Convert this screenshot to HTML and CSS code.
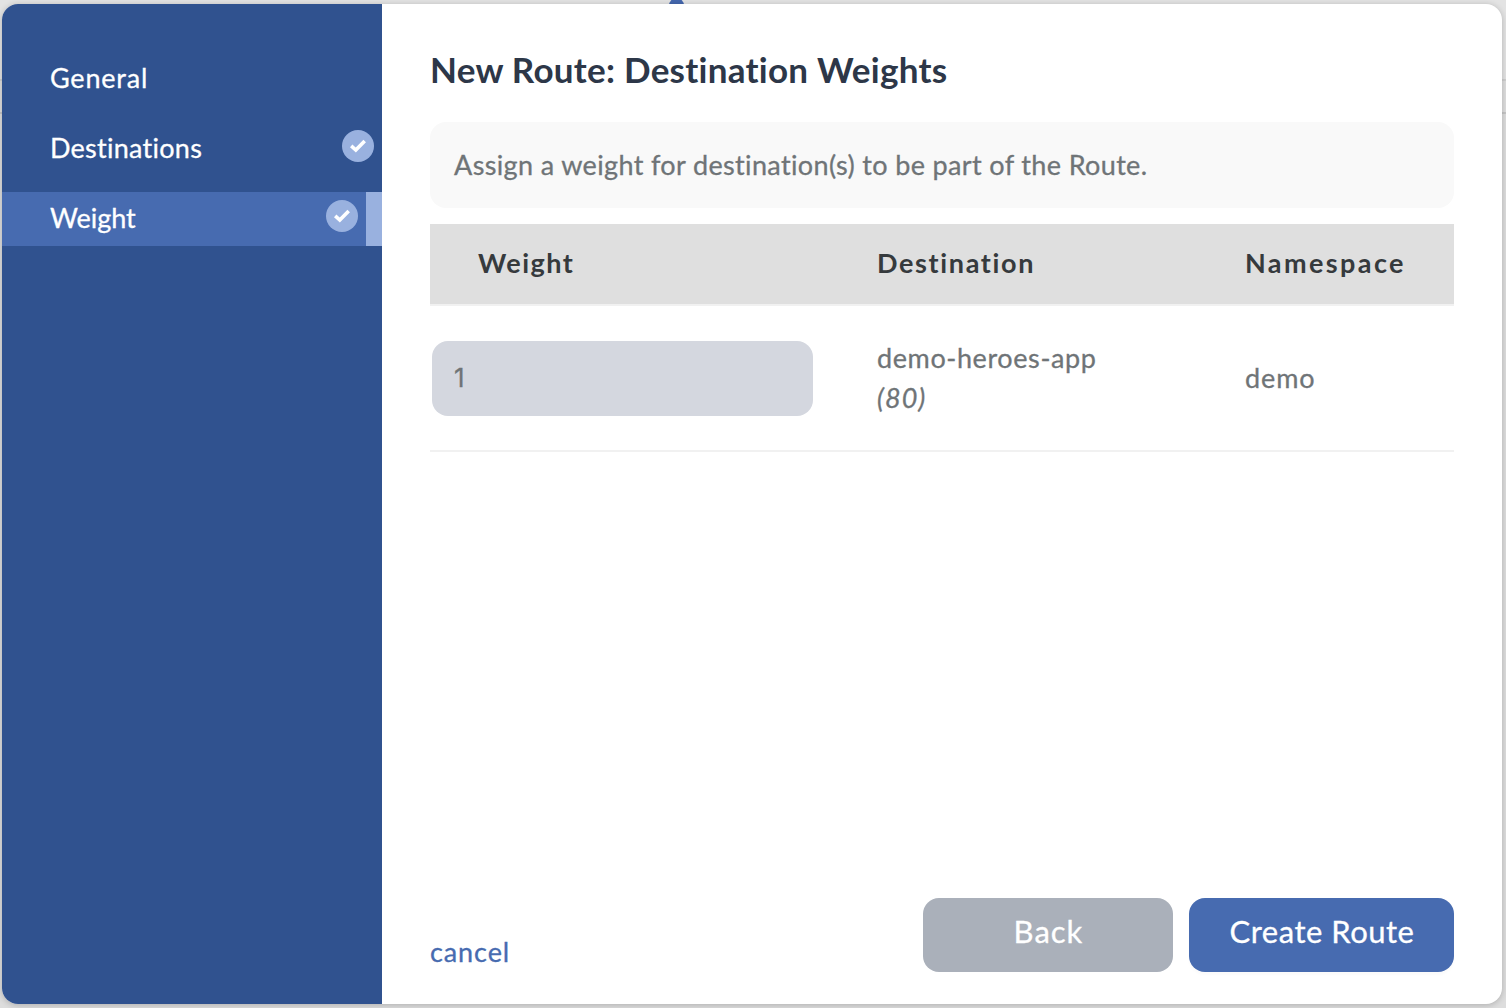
FILE: index.html
```html
<!DOCTYPE html>
<html lang="en">
<head>
<meta charset="utf-8">
<title>New Route</title>
<link rel="stylesheet" href="styles.css">
</head>
<body>
<div class="pin"></div>
<div class="modal">
  <nav class="steps">
    <div class="step step-general"><span>General</span></div>
    <div class="step step-dest"><span>Destinations</span>
      <svg class="check" viewBox="0 0 32 32"><circle cx="16" cy="16" r="16"/><path d="M9.2 15.9 13.8 20 22.7 11"/></svg>
    </div>
    <div class="step step-weight active"><span>Weight</span>
      <svg class="check" viewBox="0 0 32 32"><circle cx="16" cy="16" r="16"/><path d="M9.2 15.9 13.8 20 22.7 11"/></svg>
    </div>
  </nav>
  <main class="content">
    <h1 class="title">New Route: Destination Weights</h1>
    <p class="hint">Assign a weight for destination(s) to be part of the Route.</p>
    <div class="table">
      <div class="row head">
        <span class="th-weight">Weight</span>
        <span class="th-dest">Destination</span>
        <span class="th-ns">Namespace</span>
      </div>
      <div class="row item">
        <div class="field">1</div>
        <div class="dest"><span>demo-heroes-app</span><em>(80)</em></div>
        <span class="ns">demo</span>
      </div>
    </div>
    <footer class="footer">
      <a class="cancel">cancel</a>
      <div class="buttons">
        <button class="btn back">Back</button>
        <button class="btn create">Create Route</button>
      </div>
    </footer>
  </main>
</div>
</body>
</html>
```
FILE: styles.css
```css
* { box-sizing: border-box; }
body {
  margin: 0;
  height: 1008px;
  padding: 4px 4px 4px 2px;
  overflow: hidden;
  background: linear-gradient(#e3e3e3 0 79px, #cfcfcf 79px 81px, #dedede 81px 112px, #c6c6c6 112px 114px, #dddddd 114px);
  font-family: Lato, "Open Sans", sans-serif;
  font-size: 27px;
  line-height: 40px;
  font-variant-ligatures: none;
  -webkit-text-stroke: .3px currentColor;
  color: #6f7477;
}
.pin {
  position: absolute;
  left: 669px;
  top: -2px;
  width: 15px;
  height: 15px;
  border-radius: 50%;
  background: #4467ae;
}
.modal {
  position: relative;
  display: flex;
  height: 1000px;
  border-radius: 16px;
  overflow: hidden;
  background: #fff;
  box-shadow: 0 1px 6px rgba(0, 0, 0, .22);
}
.steps {
  width: 380px;
  padding-top: 48px;
  background: #30528f;
  color: #fff;
  display: flex;
  flex-direction: column;
  gap: 16px;
}
.step {
  height: 54px;
  padding: 0 8px 2px 48px;
  display: flex;
  align-items: center;
  justify-content: space-between;
}
.step.active {
  background: #476bb0;
  border-right: 16px solid #99b1df;
}
.step-general { letter-spacing: .8px; }
.step-dest { letter-spacing: .26px; }
.check { width: 32px; height: 32px; margin-bottom: 4px; }
.check circle { fill: #99b1df; }
.check path { fill: none; stroke: #fff; stroke-width: 3.6; }
.content {
  flex: 1;
  display: flex;
  flex-direction: column;
  padding: 42px 48px 32px;
}
.title {
  margin: 0 0 28px;
  height: 48px;
  font-size: 35px;
  line-height: 47px;
  font-weight: 700;
  letter-spacing: .27px;
  -webkit-text-stroke: 0;
  color: #2d3748;
}
.hint {
  margin: 0 0 16px;
  height: 86px;
  padding: 23px 24px;
  border-radius: 16px;
  background: #f9f9f9;
  letter-spacing: .36px;
}
.row {
  display: grid;
  grid-template-columns: 447px 368px 1fr;
  align-items: center;
  border-bottom: 2px solid #f1f1f1;
}
.head {
  height: 82px;
  padding-bottom: 2px;
  background: #dfdfdf;
  background-clip: padding-box;
  color: #363a3d;
  font-weight: 700;
  -webkit-text-stroke: 0;
}
.th-weight { padding-left: 48px; letter-spacing: 1.5px; }
.th-dest { letter-spacing: 1.65px; }
.th-ns { letter-spacing: 2.4px; }
.item { height: 146px; }
.field {
  width: 381px;
  height: 75px;
  margin-left: 2px;
  padding: 17px 22px;
  border-radius: 16px;
  background: #d4d7df;
  font-family: Inter, sans-serif;
  font-size: 26px;
}
.dest { display: flex; flex-direction: column; letter-spacing: .6px; }
.dest em { letter-spacing: 1px; }
.ns { letter-spacing: .9px; }
.footer {
  margin-top: auto;
  display: flex;
  justify-content: space-between;
  align-items: flex-end;
}
.cancel { color: #476bb0; letter-spacing: .9px; }
.buttons { display: flex; gap: 16px; }
.btn {
  height: 74px;
  padding: 0 0 9px 1px;
  border: 0;
  border-radius: 16px;
  color: #fff;
  font: 31px/40px Lato, "Open Sans", sans-serif;
  -webkit-text-stroke: .3px #fff;
}
.back { width: 250px; background: #aab0ba; letter-spacing: 1px; }
.create { width: 265px; background: #476bb0; letter-spacing: .5px; box-shadow: 0 3px 3px rgba(0, 0, 0, .02); }
```
